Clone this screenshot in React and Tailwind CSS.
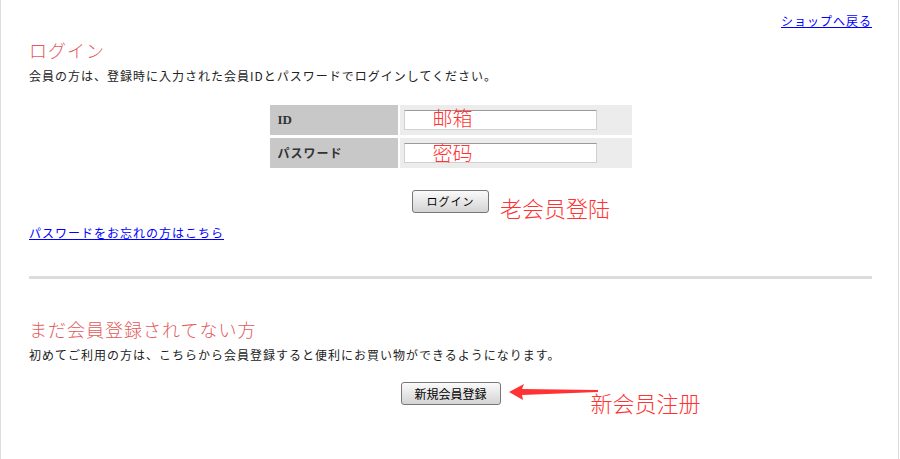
import React from 'react';

const jp = { fontFamily: '"Noto Sans CJK JP", "Noto Sans", sans-serif' };
const sc = { fontFamily: '"Noto Sans CJK SC", sans-serif' };

const Field = ({ label, note, labelClass, noteTop }) => (
    <div className="flex gap-[2px] h-[30px]">
        <div className={`w-[128px] bg-[#c8c8c8] pl-[8px] flex items-center text-[12px] font-bold text-[#333] ${labelClass}`}>
            {label}
        </div>
        <div className="relative flex-1 bg-[#ececec] pl-[4px] pt-[5px]">
            <input className="block w-[193px] h-[20px] bg-white border border-[#d0d0d0] border-t-[#9a9a9a] outline-none" />
            <span className={`absolute left-[33px] ${noteTop} text-[20px] leading-[20px] font-light text-[#ff3333]`} style={sc}>
                {note}
            </span>
        </div>
    </div>
);

const GrayButton = ({ children, className }) => (
    <button className={`block h-[23px] border border-[#777] rounded-[3px] bg-gradient-to-b from-[#fafafa] to-[#d4d4d4] text-black ${className}`}>
        {children}
    </button>
);

export default function App() {
    return (
        <div className="w-[899px] h-[459px] bg-white border-l border-r border-[#dcdcdc] pl-[28px] pr-[26px] overflow-hidden" style={jp}>
            {/* top link */}
            <div className="flex justify-end pt-[14px] leading-[14px]">
                <a href="#" className="text-[12px] leading-[14px] tracking-[1px] text-[#0000ff] underline">ショップへ戻る</a>
            </div>

            {/* login section */}
            <h2 className="mt-[12px] text-[18px] leading-[20px] tracking-[1px] font-light text-[#e35a5a]">ログイン</h2>
            <p className="mt-[9px] text-[12px] leading-[14px] tracking-[1px] text-[#222]">
                会員の方は、登録時に入力された会員IDとパスワードでログインしてください。
            </p>

            <div className="mt-[21px] mx-auto w-[364px] p-[1px] flex flex-col gap-[3px]">
                <Field label="ID" note="邮箱" noteTop="top-[3px]" labelClass="font-['Liberation_Serif',serif] text-[13px]" />
                <Field label="パスワード" note="密码" noteTop="top-[5px]" labelClass="tracking-[1px]" />
            </div>

            <div className="mt-[21px] flex justify-center">
                <div className="relative flex">
                    <GrayButton className="w-[77px] text-[11px] tracking-[1px]">ログイン</GrayButton>
                    <span className="absolute left-[88px] top-[6px] whitespace-nowrap text-[22px] leading-[22px] font-light text-[#ff3333]" style={sc}>
                        老会员登陆
                    </span>
                </div>
            </div>

            <div className="mt-[13px] flex leading-[14px]">
                <a href="#" className="text-[12px] leading-[14px] tracking-[1px] text-[#0000ff] underline">パスワードをお忘れの方はこちら</a>
            </div>

            <div className="mt-[36px] h-[3px] bg-[#dcdcdc]" />

            {/* register section */}
            <h2 className="mt-[40px] text-[18px] leading-[20px] tracking-[1px] font-light text-[#e35a5a]">まだ会員登録されてない方</h2>
            <p className="mt-[9px] text-[12px] leading-[14px] tracking-[1px] text-[#222]">
                初めてご利用の方は、こちらから会員登録すると便利にお買い物ができるようになります。
            </p>

            <div className="mt-[20px] flex justify-center">
                <div className="relative flex">
                    <GrayButton className="w-[100px] text-[12px]">新規会員登録</GrayButton>
                    <svg className="absolute left-[107px] top-[1px]" width="92" height="18" viewBox="0 0 92 18">
                        <polygon points="1,9 16,1 14,6 90,7 90,9 14,12 15,17" fill="#ff3333" />
                    </svg>
                    <span className="absolute left-[190px] top-[9px] whitespace-nowrap text-[22px] leading-[22px] font-light text-[#ff3333]" style={sc}>
                        新会员注册
                    </span>
                </div>
            </div>
        </div>
    );
}
